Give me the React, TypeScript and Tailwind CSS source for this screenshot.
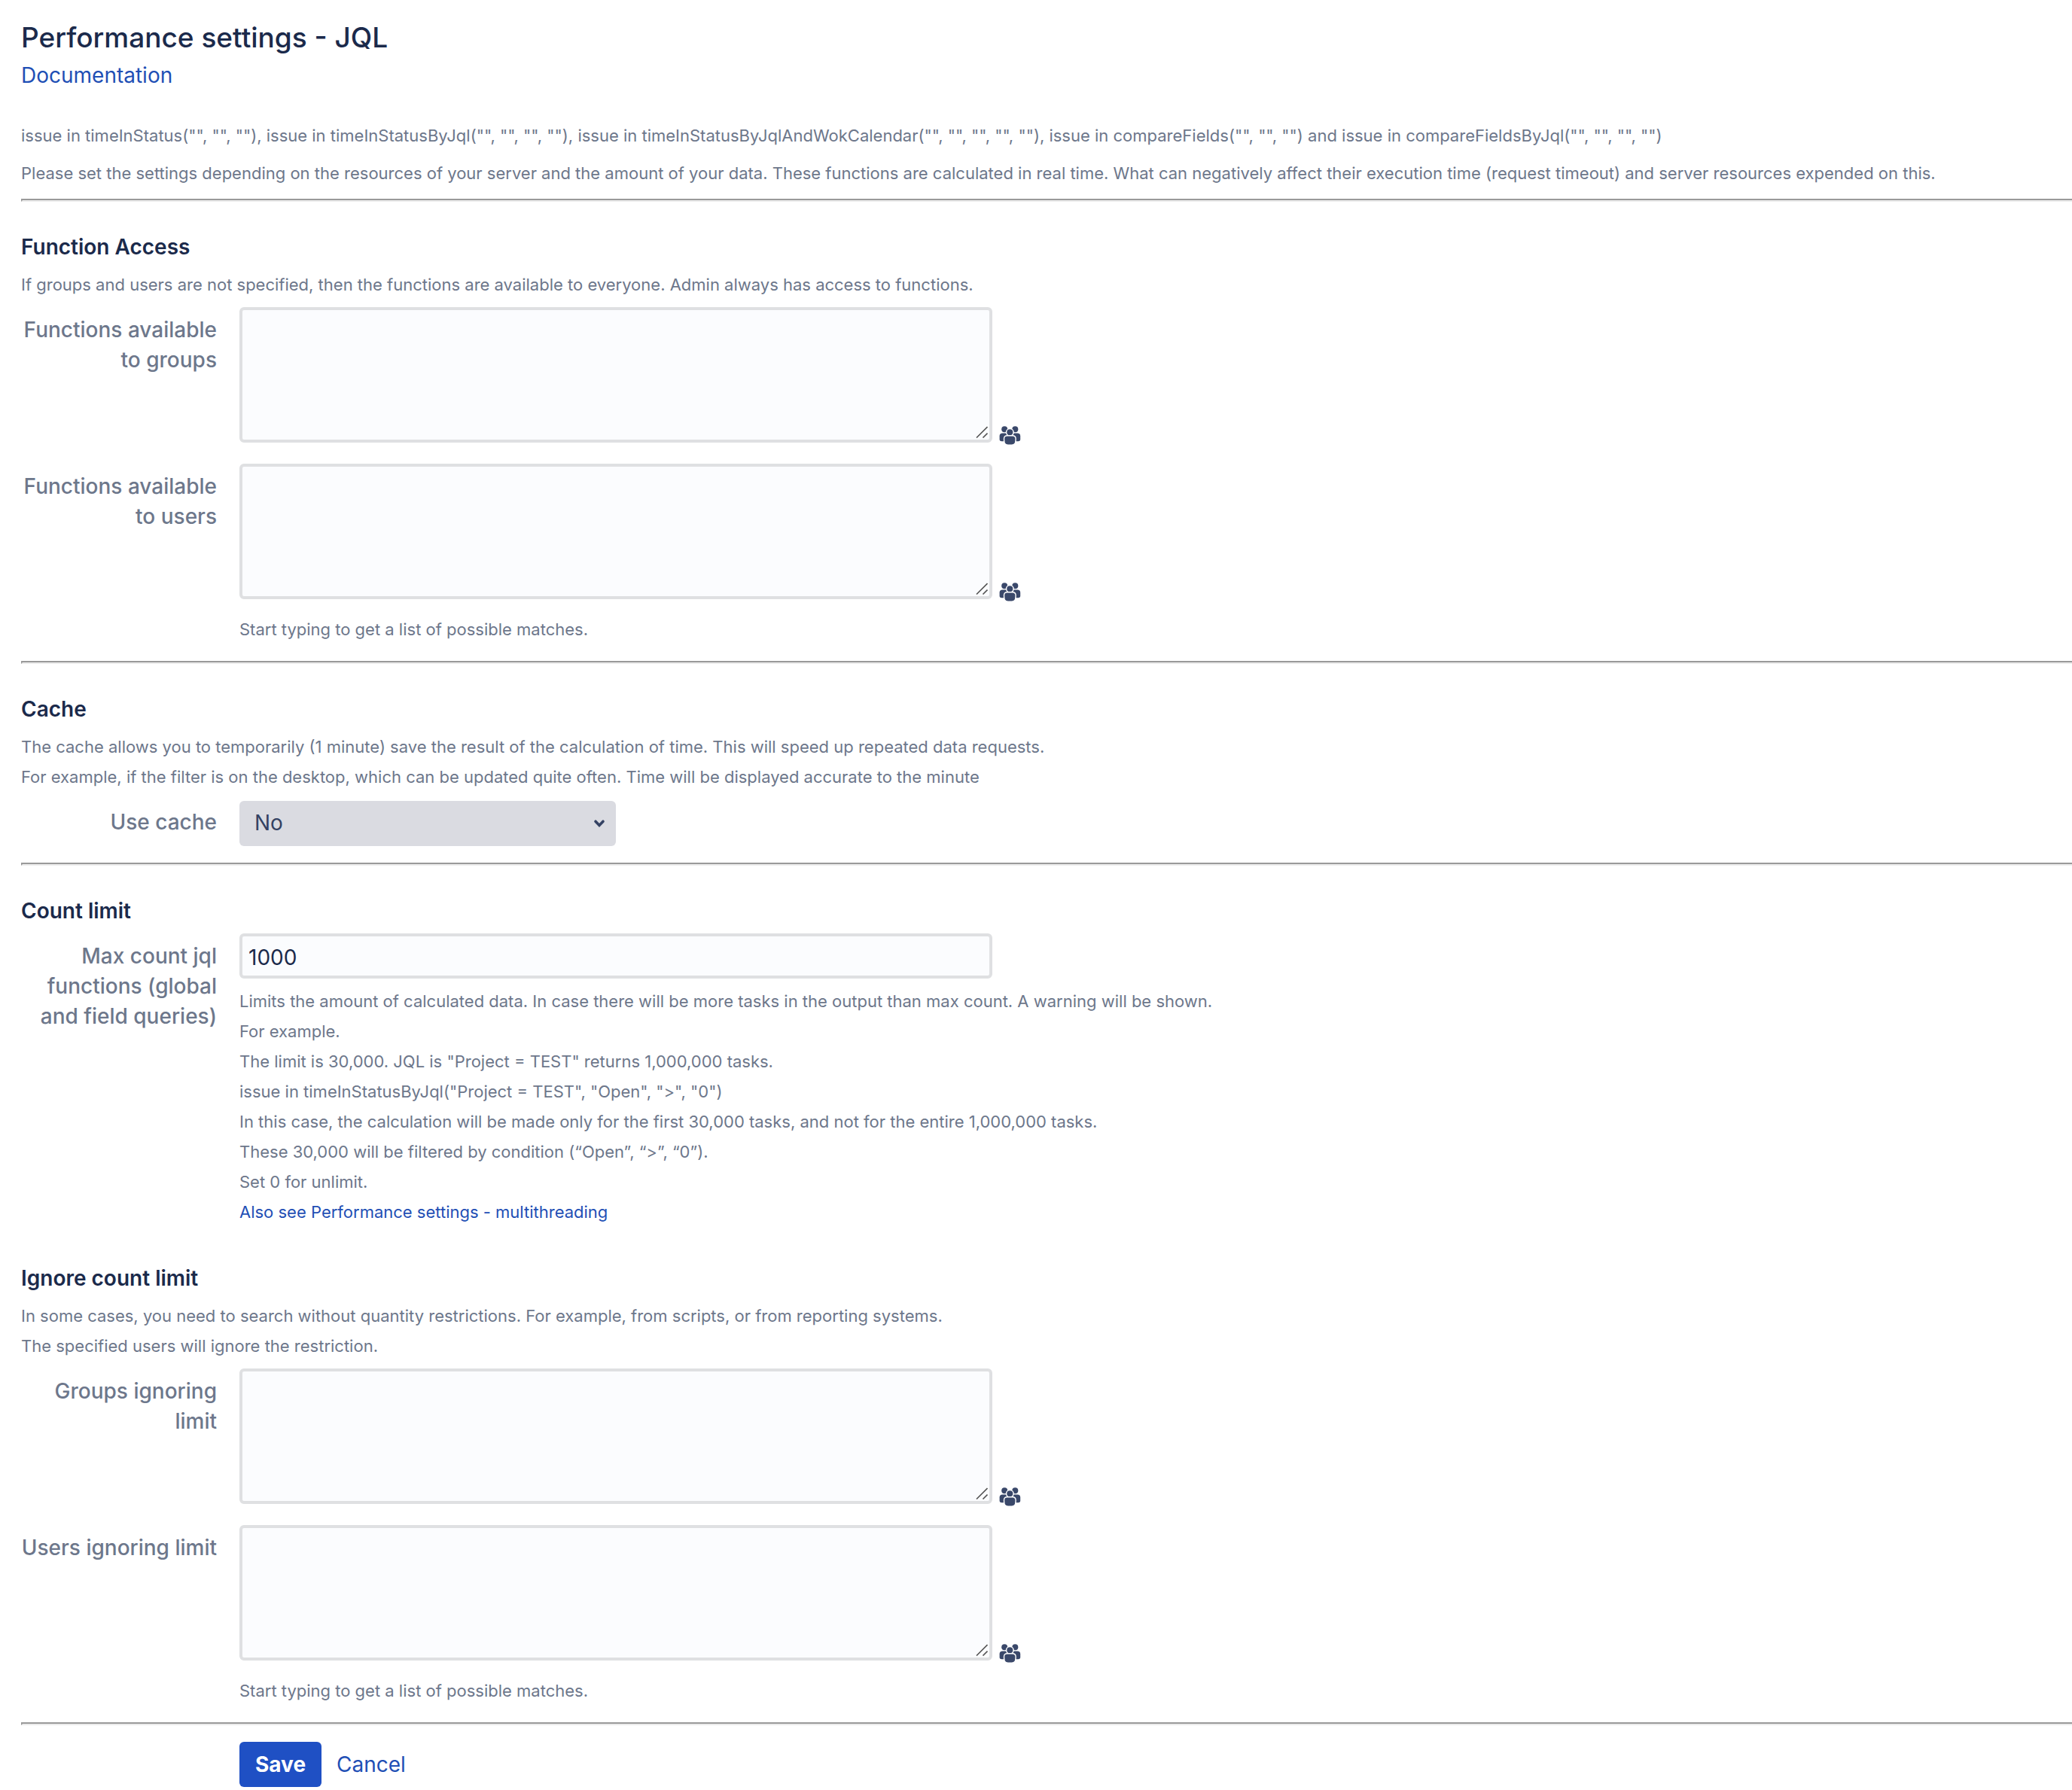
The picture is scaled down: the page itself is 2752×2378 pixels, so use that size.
import type { ReactNode } from "react";

function GroupIcon() {
  return (
    <svg width="29" height="25" viewBox="0 0 29 25" fill="#3a486a" aria-hidden="true">
      <circle cx="7.2" cy="4.3" r="4" />
      <circle cx="21.3" cy="4.3" r="4" />
      <path d="M0.6 13.2C0.6 10.6 2 9.4 4.5 9.4H10V20.2H3.6C1.4 20.2 0.6 19.2 0.6 17.4Z" />
      <path d="M28.2 13.2C28.2 10.6 26.8 9.4 24.3 9.4H18.5V20.2H25.2C27.4 20.2 28.2 19.2 28.2 17.4Z" />
      <circle cx="14.3" cy="8.3" r="4.8" stroke="#fff" strokeWidth="1.5" />
      <path
        d="M6.5 17C6.5 14.2 8 12.8 10.8 12.8H17.8C20.6 12.8 22.1 14.2 22.1 17C22.1 18.5 22 20 21.6 21.8C21.1 24.2 18.5 25.2 14.3 25.2C10.1 25.2 7.5 24.2 7 21.8C6.6 20 6.5 18.5 6.5 17Z"
        stroke="#fff"
        strokeWidth="1.4"
      />
    </svg>
  );
}

function Rule() {
  return <hr className="h-1 border-2 border-r-0 border-t-[#9a9a9a] border-l-[#9a9a9a] border-b-[#ececec]" />;
}

function Heading({ children }: { children: ReactNode }) {
  return <h3 className="mb-2.5 text-[28px] leading-10 font-semibold text-[#1b2a4b]">{children}</h3>;
}

function Note({ children }: { children: ReactNode }) {
  return <p className="text-[22px] leading-10 text-[#6d778b]">{children}</p>;
}

function Row({ id, label, children }: { id: string; label: string; children: ReactNode }) {
  return (
    <div className="flex items-start gap-[30px]">
      <label
        htmlFor={id}
        className="w-[260px] shrink-0 pt-2.5 text-right text-[28px] leading-10 font-medium text-[#6d778b]"
      >
        {label}
      </label>
      <div className="min-w-0 flex-1">{children}</div>
    </div>
  );
}

function Picker({ id, label, help }: { id: string; label: string; help?: string }) {
  return (
    <Row id={id} label={label}>
      <div className="flex items-end gap-[9px]">
        <div className="relative w-full max-w-[1000px]">
          <textarea
            id={id}
            className="block h-45 w-full resize-none rounded-md border-4 border-[#dfe0e2] bg-[#fbfcfe] px-2 py-2 text-[28px] leading-10 text-[#1b2a4b]"
          />
          <svg
            className="pointer-events-none absolute right-1.5 bottom-1.5"
            width="16"
            height="16"
            viewBox="0 0 16 16"
            stroke="#555"
            strokeWidth="1.6"
            aria-hidden="true"
          >
            <path d="M1 15.5L15.5 1M9.5 15.5L15.5 9.5" />
          </svg>
        </div>
        <button type="button" aria-label={"Browse: " + label} className="-mb-[3px] shrink-0">
          <GroupIcon />
        </button>
      </div>
      {help && (
        <div className="pt-5">
          <Note>{help}</Note>
        </div>
      )}
    </Row>
  );
}

export default function App() {
  return (
    <main className="min-h-screen bg-white pt-7 pl-7 font-['Inter',sans-serif]">
      <h1 className="text-[37px] leading-[44px] font-medium text-[#1b2a4b]">Performance settings - JQL</h1>
      <div className="mt-2 mb-10 text-[28px] leading-10">
        <a href="#documentation" className="text-[#1f4fb5]">
          Documentation
        </a>
      </div>
      <div className="mb-3.5 flex flex-col gap-2.5">
        <Note>
          issue in timeInStatus("", "", ""), issue in timeInStatusByJql("", "", "", ""), issue in
          timeInStatusByJqlAndWokCalendar("", "", "", "", ""), issue in compareFields("", "", "") and issue in
          compareFieldsByJql("", "", "", "")
        </Note>
        <Note>
          Please set the settings depending on the resources of your server and the amount of your data. These
          functions are calculated in real time. What can negatively affect their execution time (request timeout)
          and server resources expended on this.
        </Note>
      </div>
      <Rule />

      <form onSubmit={(e) => e.preventDefault()}>
        <section className="pt-10 pb-[22px]">
          <Heading>Function Access</Heading>
          <Note>
            If groups and users are not specified, then the functions are available to everyone. Admin always has
            access to functions.
          </Note>
          <div className="mt-2.5 flex flex-col gap-7">
            <Picker id="groups" label="Functions available to groups" />
            <Picker
              id="users"
              label="Functions available to users"
              help="Start typing to get a list of possible matches."
            />
          </div>
        </section>
        <Rule />

        <section className="pt-10 pb-[22px]">
          <Heading>Cache</Heading>
          <Note>
            The cache allows you to temporarily (1 minute) save the result of the calculation of time. This will
            speed up repeated data requests.
            <br />
            For example, if the filter is on the desktop, which can be updated quite often. Time will be displayed
            accurate to the minute
          </Note>
          <div className="mt-2.5">
            <Row id="cache" label="Use cache">
              <div className="relative mt-0.5 w-full max-w-[500px]">
                <select
                  id="cache"
                  defaultValue="No"
                  className="block h-15 w-full appearance-none rounded-md bg-[#dadbe1] px-5 pb-0.5 text-[28px] leading-10 text-[#344263]"
                >
                  <option>No</option>
                  <option>Yes</option>
                </select>
                <svg
                  className="pointer-events-none absolute top-6 right-3.5"
                  width="16"
                  height="12"
                  viewBox="0 0 16 12"
                  fill="none"
                  stroke="#344263"
                  strokeWidth="3.6"
                  strokeLinecap="round"
                  aria-hidden="true"
                >
                  <path d="M3 3.2L8 8.4L13 3.2" />
                </svg>
              </div>
            </Row>
          </div>
        </section>
        <Rule />

        <section className="pt-10 pb-12">
          <Heading>Count limit</Heading>
          <Row id="max-count" label="Max count jql functions (global and field queries)">
            <input
              id="max-count"
              type="text"
              defaultValue="1000"
              className="mb-2.5 block h-15 w-full max-w-[1000px] rounded-md border-4 border-[#dfe0e2] bg-[#fbfcfe] px-2 pt-1 text-[28px] leading-10 text-[#1b2a4b]"
            />
            <Note>
              Limits the amount of calculated data. In case there will be more tasks in the output than max count. A
              warning will be shown.
              <br />
              For example.
              <br />
              The limit is 30,000. JQL is "Project = TEST" returns 1,000,000 tasks.
              <br />
              issue in timeInStatusByJql("Project = TEST", "Open", "&gt;", "0")
              <br />
              In this case, the calculation will be made only for the first 30,000 tasks, and not for the entire
              1,000,000 tasks.
              <br />
              These 30,000 will be filtered by condition (“Open”, “&gt;”, “0”).
              <br />
              Set 0 for unlimit.
              <br />
              <a href="#multithreading" className="text-[#1f4fb5]">
                Also see Performance settings - multithreading
              </a>
            </Note>
          </Row>
        </section>

        <section className="pb-[22px]">
          <Heading>Ignore count limit</Heading>
          <Note>
            In some cases, you need to search without quantity restrictions. For example, from scripts, or from
            reporting systems.
            <br />
            The specified users will ignore the restriction.
          </Note>
          <div className="mt-2.5 flex flex-col gap-7">
            <Picker id="ignore-groups" label="Groups ignoring limit" />
            <Picker
              id="ignore-users"
              label="Users ignoring limit"
              help="Start typing to get a list of possible matches."
            />
          </div>
        </section>
        <Rule />

        <div className="mt-[22px] flex items-center gap-5 pl-[290px] text-[28px] leading-10">
          <button type="submit" className="h-15 rounded-md bg-[#1f50c4] px-[21px] font-bold text-white">
            Save
          </button>
          <a href="#cancel" className="text-[#1f4fb5]">
            Cancel
          </a>
        </div>
      </form>
    </main>
  );
}
